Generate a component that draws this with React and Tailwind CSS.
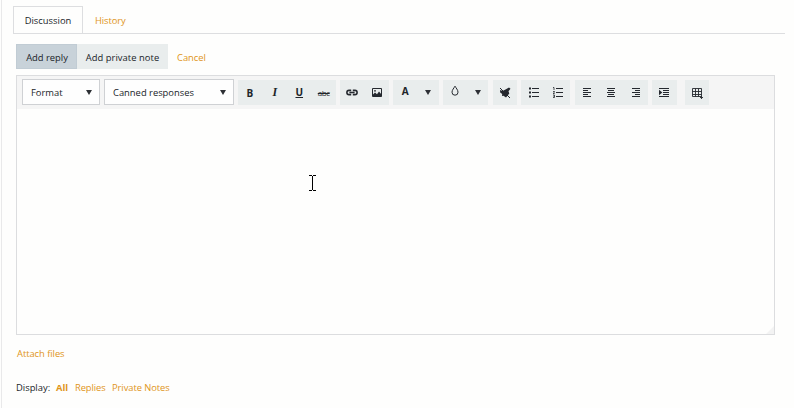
import React from "react";

const Cell = ({ children, className = "w-[24.5px]" }) => (
  <button className={`flex h-[25px] shrink-0 items-center justify-center ${className}`}>{children}</button>
);

const Group = ({ children, className = "" }) => (
  <div className={`flex h-[25px] shrink-0 bg-[#e9eded] ${className}`}>{children}</div>
);

const Icon = ({ children, className = "" }) => (
  <svg width="12" height="12" viewBox="0 0 12 12" fill="none" stroke="#25292f" className={className}>
    {children}
  </svg>
);

const Arrow = ({ className = "" }) => (
  <svg width="6" height="5" viewBox="0 0 6 5" className={className}>
    <path d="M0 0h6L3 5z" fill="#2d3035" />
  </svg>
);

const Select = ({ label, className }) => (
  <div className={`flex h-[26px] shrink-0 items-center justify-between border border-[#cfd1d4] bg-[#fefefe] pr-[7px] pl-2 ${className}`}>
    <span className="pt-[2px]">{label}</span>
    <Arrow />
  </div>
);

export default function App() {
  return (
    <div className="flex h-[408px] w-[794px] overflow-hidden bg-[#fefefd] font-['Open_Sans','Noto_Sans',sans-serif] text-[9.4px] leading-[14px] whitespace-nowrap text-[#202429]">
      <div className="ml-px h-full w-px shrink-0 bg-[#e9e9ea]" />
      <main className="min-w-0 flex-1">
        <nav className="mt-[6px] ml-[11px] flex h-[28px] w-[772px] border-b border-[#dddee0]">
          <div className="flex w-[70px] items-start justify-center border border-b-0 border-[#dddee0] pt-[7px]">
            <span>Discussion</span>
          </div>
          <a className="ml-3 pt-[8px] tracking-[-0.1px] text-[#e0951a]">History</a>
        </nav>

        <div className="mt-[10px] ml-[14px] flex h-[25px] items-center">
          <button className="h-[25px] w-[61px] border border-[#c1ccd4] bg-[#c8d2d9] pt-[3px] pl-px">Add reply</button>
          <button className="h-[25px] w-[91px] bg-[#e9eded] pt-[3px] tracking-[0.05px]">Add private note</button>
          <a className="ml-[9px] pt-[2px] text-[#e0951a]">Cancel</a>
        </div>

        <section className="relative mt-[6px] ml-[14px] h-[260px] w-[759px] border border-[#dcdddf]">
          <div className="flex h-[33px] items-start bg-[#f5f5f5] pt-[4px] pl-[5px]">
            <Select label="Format" className="-mt-px w-[78px]" />
            <Select label="Canned responses" className="-mt-px ml-1 w-[130px]" />
            <Group className="ml-1">
              <Cell><b className="-ml-px text-[10px]">B</b></Cell>
              <Cell><i className="-mt-px font-['Liberation_Serif',serif] text-[12px] font-bold">I</i></Cell>
              <Cell><b className="-mt-[2px] text-[10px] underline underline-offset-1">U</b></Cell>
              <Cell><s className="text-[8px] tracking-[-0.4px]">abc</s></Cell>
            </Group>
            <Group className="ml-1">
              <Cell>
                <Icon>
                  <path d="M5.200 3.400H3a2.100 2.100 0 0 0 0 4.200h2.200M6.800 3.400H9a2.100 2.100 0 0 1 0 4.200H6.800M3.400 5.500h5.200" strokeWidth="1.600" />
                </Icon>
              </Cell>
              <Cell>
                <Icon>
                  <path d="M1.500 1.500h9v8h-9z" />
                  <path d="M2 9.500V7.500l2-2 2 1.800L8 4.500l2.500 3v2H2z" fill="#25292f" stroke="none" />
                  <circle cx="4" cy="3.800" r=".9" fill="#25292f" stroke="none" />
                </Icon>
              </Cell>
            </Group>
            <Group className="ml-1">
              <Cell><b className="-mt-[3px] text-[10px]">A</b></Cell>
              <Cell className="w-[21px]"><Arrow /></Cell>
            </Group>
            <Group className="ml-1">
              <Cell>
                <Icon className="-mt-[3px]">
                  <path d="M6 1.200C5 3 3 5 3 7.200a3 3 0 0 0 6 0C9 5 7 3 6 1.200z" />
                </Icon>
              </Cell>
              <Cell className="w-[21px]"><Arrow /></Cell>
            </Group>
            <Group className="ml-[4.5px]">
              <Cell>
                <Icon>
                  <path d="M1 3l2.500 1L6.500 2.500 10 .500l1.500 1.200L9.500 4.200 10.300 6.500 7 10.500 4.500 8.800 3 9 3.200 7 1.200 5.500z" fill="#25282e" stroke="none" />
                  <path d="M1 1l10 10" strokeWidth="1" />
                </Icon>
              </Cell>
            </Group>
            <Group className="ml-1">
              <Cell>
                <Icon className="ml-px">
                  <path d="M4 1.500H11M4 5.500H11M4 9.500H11" />
                  <path d="M1 1.500h2M1 5.500h2M1 9.500h2" strokeWidth="2" />
                </Icon>
              </Cell>
              <Cell>
                <Icon className="ml-px">
                  <path d="M4 1.500H11M4 5.500H11M4 9.500H11" />
                  <path d="M1 .500h1v2.500M1 4.500h1.500v.700L1 6.500h1.700M1 8h1.500v2.500H1M1.300 9.200h1" strokeWidth=".8" />
                </Icon>
              </Cell>
            </Group>
            <Group className="ml-[4.5px]">
              <Cell><Icon><path d="M2 1.500h8M2 3.500h5M2 5.500h8M2 7.500h5M2 9.500h8" /></Icon></Cell>
              <Cell><Icon><path d="M2 1.500h8M3 3.500h6M2 5.500h8M3 7.500h6M2 9.500h8" /></Icon></Cell>
              <Cell><Icon><path d="M2 1.500h8M5 3.500h5M2 5.500h8M5 7.500h5M2 9.500h8" /></Icon></Cell>
            </Group>
            <Group className="ml-1">
              <Cell>
                <Icon>
                  <path d="M1 1.500h10M5 3.500H11M5 5.500H11M5 7.500H11M1 9.500h10" />
                  <path d="M1 2.800l3.300 2.700L1 8.200z" fill="#25292f" stroke="none" />
                </Icon>
              </Cell>
            </Group>
            <Group className="ml-2">
              <Cell>
                <Icon className="ml-px">
                  <path d="M1.500 1.500h9v8h-9zM4.500 1.500v8M7.500 1.500v8M1.500 4.500h9M1.500 7.500h9M9 10.500h3M10.500 9v3" strokeWidth=".9" />
                </Icon>
              </Cell>
            </Group>
          </div>
          <svg width="8" height="8" viewBox="0 0 8 8" className="absolute right-0 bottom-0">
            <path d="M0 8L8 0v8z" fill="#f3f3f3" />
          </svg>
          <svg width="7" height="16" viewBox="0 0 7 16" className="absolute top-[99px] left-[292px]" fill="none" stroke="#000" shapeRendering="crispEdges">
            <path d="M0 .5h3M4 .5h3M3.500 1v14M0 15.500h3M4 15.500h3" />
          </svg>
        </section>

        <div className="mt-[12px] ml-[15px] flex tracking-[-0.05px] text-[#e0951a]">Attach files</div>
        <div className="mt-[20px] ml-[14px] flex">
          <span className="w-[40px]">Display:</span>
          <b className="w-[19px] text-[#e0951a]">All</b>
          <a className="w-[37px] tracking-[-0.1px] text-[#e0951a]">Replies</a>
          <a className="tracking-[-0.07px] text-[#e0951a]">Private Notes</a>
        </div>
      </main>
    </div>
  );
}
